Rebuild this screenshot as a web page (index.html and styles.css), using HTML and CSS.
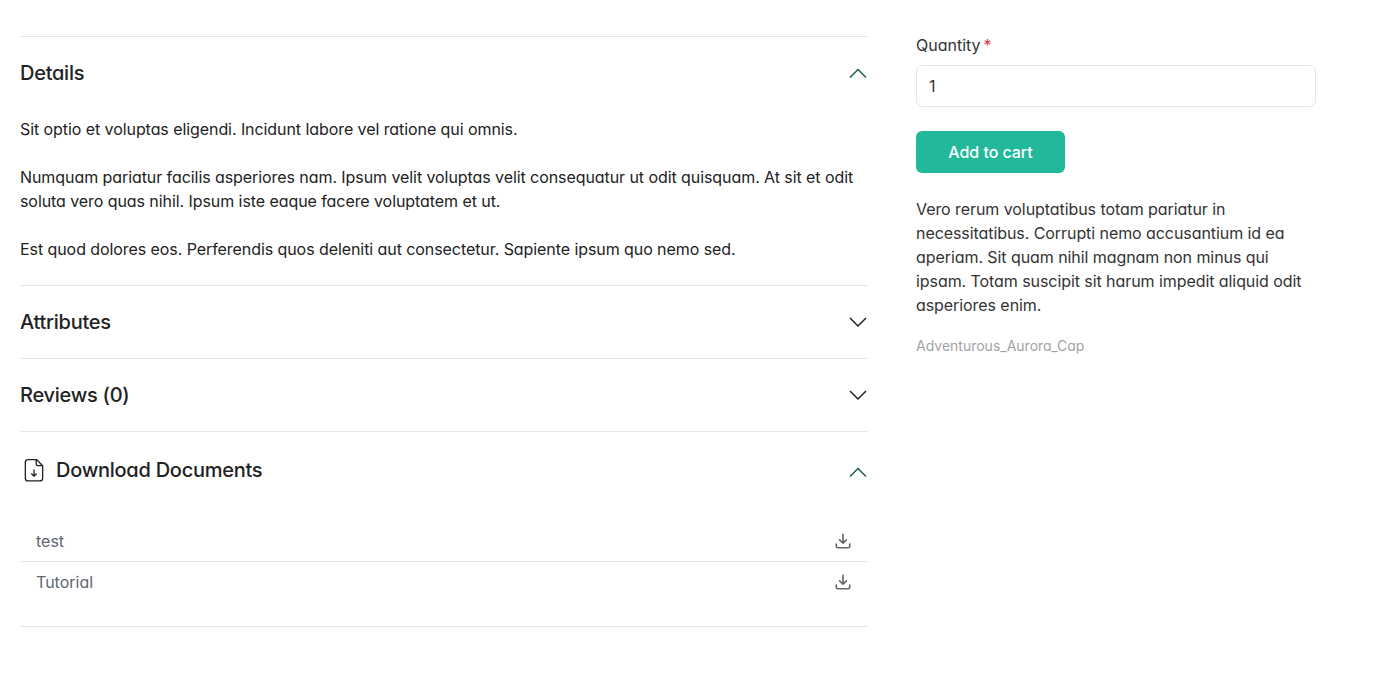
FILE: index.html
```html
<!DOCTYPE html>
<html lang="en">
<head>
<meta charset="utf-8">
<title>Product</title>
<link rel="stylesheet" href="styles.css">
</head>
<body>
<main class="page">
  <section class="accordion">
    <div class="item">
      <div class="item-head"><h2>Details</h2>
        <svg class="chev open" viewBox="0 0 20 20"><path d="M2 14.5 10 6.5 18 14.5"/></svg></div>
      <div class="item-body">
        <p>Sit optio et voluptas eligendi. Incidunt labore vel ratione qui omnis.</p>
        <p>Numquam pariatur facilis asperiores nam. Ipsum velit voluptas velit consequatur ut odit quisquam. At sit et odit soluta vero quas nihil. Ipsum iste eaque facere voluptatem et ut.</p>
        <p>Est quod dolores eos. Perferendis quos deleniti aut consectetur. Sapiente ipsum quo nemo sed.</p>
      </div>
    </div>
    <div class="item">
      <div class="item-head"><h2>Attributes</h2>
        <svg class="chev" viewBox="0 0 20 20"><path d="M2 6 10 14 18 6"/></svg></div>
    </div>
    <div class="item">
      <div class="item-head"><h2>Reviews (0)</h2>
        <svg class="chev" viewBox="0 0 20 20"><path d="M2 6 10 14 18 6"/></svg></div>
    </div>
    <div class="item">
      <div class="item-head docs-head">
        <div class="docs-title">
          <svg class="file-icon" viewBox="0 0 24 24"><path d="M6 2.500h8.500L20 8v11.500a2.500 2.500 0 0 1-2.500 2.500h-11A2.500 2.500 0 0 1 4 19.500v-14.500A2.500 2.500 0 0 1 6 2.500Z"/><path d="M14 2.500V6a2 2 0 0 0 2 2h4"/><path d="M12 11.500v6M9.500 15.200 12 17.700l2.500-2.500"/></svg>
          <h2>Download Documents</h2>
        </div>
        <svg class="chev open chev-low" viewBox="0 0 20 20"><path d="M2 14.500 10 6.500 18 14.500"/></svg>
      </div>
      <ul class="docs">
        <li><span>test</span><svg class="dl" viewBox="0 0 24 24"><path d="M12 3v12M7.500 10.500 12 15l4.500-4.500M3 16v3a2 2 0 0 0 2 2h14a2 2 0 0 0 2-2v-3"/></svg></li>
        <li><span>Tutorial</span><svg class="dl" viewBox="0 0 24 24"><path d="M12 3v12M7.500 10.500 12 15l4.500-4.500M3 16v3a2 2 0 0 0 2 2h14a2 2 0 0 0 2-2v-3"/></svg></li>
      </ul>
    </div>
  </section>
  <aside class="buy">
    <label class="qty-label" for="qty">Quantity<span class="req">*</span></label>
    <input class="qty" id="qty" type="text" value="1">
    <button class="add" type="button">Add to cart</button>
    <p class="desc">Vero rerum voluptatibus totam pariatur in necessitatibus. Corrupti nemo accusantium id ea aperiam. Sit quam nihil magnam non minus qui ipsam. Totam suscipit sit harum impedit aliquid odit asperiores enim.</p>
    <p class="sku">Adventurous_Aurora_Cap</p>
  </aside>
</main>
</body>
</html>
```
FILE: styles.css
```css
* { box-sizing: border-box; }
html, body { margin: 0; background: #fff; }
body {
  font-family: Inter, "Liberation Sans", sans-serif;
  font-feature-settings: "cv11";
  font-size: 16px;
  line-height: 24px;
  color: #222;
  overflow: hidden;
  height: 674px;
}
.page { display: flex; align-items: flex-start; gap: 48px; padding: 36px 70px 0 20px; }
.accordion { width: 848px; flex: none; border-bottom: 1px solid #e5e5e5; }
.item { border-top: 1px solid #e5e5e5; }
.item-head { display: flex; align-items: center; justify-content: space-between; padding: 24px 0; }
.item-head h2 { margin: 0; font-size: 20px; line-height: 24px; font-weight: 450; letter-spacing: -0.26px; color: #222; }
.chev { width: 20px; height: 20px; fill: none; stroke: #222; stroke-width: 1.500; }
.chev.open { stroke: #1d5c4f; }
.chev-low { margin-top: 4px; }
.item-body { padding: 8px 0 24px; letter-spacing: -0.073px; }
.item-body p { margin: 0 0 24px; }
.item-body p:last-child { margin: 0; }
.docs-title { display: flex; align-items: center; gap: 9px; height: 28px; padding-left: 1px; }
.file-icon { width: 26px; height: 26px; fill: none; stroke: #222; stroke-width: 1.200; stroke-linejoin: round; }
.docs { list-style: none; margin: 13px 0 0; padding: 0 0 24px; color: #5f6672; }
.docs li { display: flex; justify-content: space-between; align-items: center; height: 40px; padding: 0 16px; }
.docs li:first-child { height: 41px; border-bottom: 1px solid #e5e5e5; }
.dl { width: 18px; height: 18px; fill: none; stroke: #666; stroke-width: 2.200; stroke-linecap: round; stroke-linejoin: round; }
.buy { width: 400px; flex: none; display: flex; flex-direction: column; align-items: flex-start; color: #333; }
.qty-label { line-height: 18px; margin-bottom: 11px; }
.req { color: #dc3545; margin-left: 3px; }
.qty { width: 100%; height: 42px; border: 1px solid #e5e5e5; border-radius: 6px; padding: 0 12px; font: inherit; color: #333; background: #fff; }
.add { margin-top: 24px; width: 149px; height: 42px; border: 0; border-radius: 6px; background: #22b99a; color: #fff; font: inherit; font-feature-settings: normal; font-weight: 450; letter-spacing: -0.05px; }
.desc { margin: 24px 0 0; letter-spacing: -0.07px; }
.sku { margin: 19px 0 0; font-size: 14px; line-height: 20px; color: #a3a3a3; }
```
